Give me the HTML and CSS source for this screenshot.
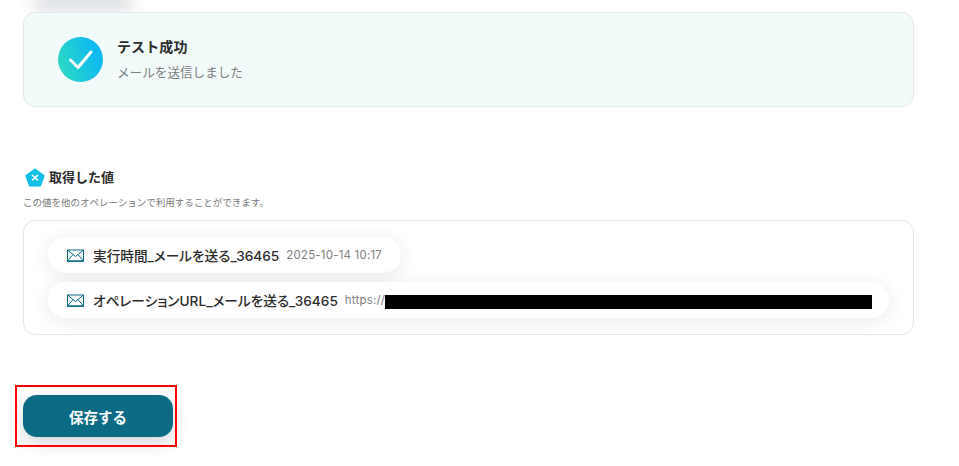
FILE: index.html
```html
<!DOCTYPE html>
<html lang="ja">
  <head>
    <meta charset="UTF-8" />
    <meta name="viewport" content="width=device-width, initial-scale=1.0" />
    <title>テスト成功</title>
    <link rel="stylesheet" href="styles.css">
  </head>
  <body>
    <div class="page">
      <!-- shadow of the button scrolled off above -->
      <div class="cut-btn"></div>

      <div class="result-card">
        <div class="check-icon">
          <svg width="45" height="45" viewBox="0 0 45 45" fill="none">
            <path d="M12.5 23 L20 30.5 L33 15" stroke="#fff" stroke-width="3" stroke-linecap="round" stroke-linejoin="round" />
          </svg>
        </div>
        <div class="result-text">
          <div class="result-title">テスト成功</div>
          <div class="result-sub">メールを送信しました</div>
        </div>
      </div>

      <div class="values-head">
        <svg class="pentagon" width="20" height="20" viewBox="0 0 20 20">
          <path d="M10 1.6 L18.6 7.8 L15.2 17.4 L4.8 17.4 L1.4 7.8 Z" fill="#12bfe8" stroke="#12bfe8" stroke-width="2" stroke-linejoin="round" />
          <path d="M7.4 7.4 L12.6 12 M12.6 7.4 L7.4 12" stroke="#fff" stroke-width="1.5" stroke-linecap="round" />
        </svg>
        <span>取得した値</span>
      </div>
      <p class="values-note">この値を他のオペレーションで利用することができます。</p>

      <div class="values-box">
        <div class="pill">
          <svg class="mail" width="17" height="13" viewBox="0 0 17 13" fill="none">
            <path d="M0.5 1 H16.5 V12 H0.5 Z M0.5 1 L8.5 7.5 L16.5 1 M0.5 12 L6 5.5 M16.5 12 L11 5.5" stroke="#0b6a84" stroke-width="1" />
            <path d="M0 12.2 H17" stroke="#0b6a84" stroke-width="1.4" />
          </svg>
          <span class="pill-name">実行時間_メールを送る_36465</span>
          <span class="pill-value">2025-10-14 10:17</span>
        </div>
        <div class="pill pill-wide">
          <svg class="mail" width="17" height="13" viewBox="0 0 17 13" fill="none">
            <path d="M0.5 1 H16.5 V12 H0.5 Z M0.5 1 L8.5 7.5 L16.5 1 M0.5 12 L6 5.5 M16.5 12 L11 5.5" stroke="#0b6a84" stroke-width="1" />
            <path d="M0 12.2 H17" stroke="#0b6a84" stroke-width="1.4" />
          </svg>
          <span class="pill-name">オペレーションURL_メールを送る_36465</span>
          <span class="pill-value">https://</span>
          <span class="redacted"></span>
        </div>
      </div>

      <div class="save-row">
        <button class="save-btn">保存する</button>
        <div class="highlight"></div>
      </div>
    </div>
  </body>
</html>
```

FILE: styles.css
```css
* {
  margin: 0;
  padding: 0;
  box-sizing: border-box;
}

html,
body {
  height: 100%;
  overflow: hidden;
}

body {
  background-color: #fff;
  color: #2b2b2b;
  font-family: "Inter", "Noto Sans CJK JP", sans-serif;
}

.page {
  width: 914px;
  padding-left: 23px;
  padding-top: 12px;
}

.cut-btn {
  width: 100px;
  height: 10px;
  margin: -22px 0 12px 10px;
  border-radius: 12px;
  box-shadow: 0 8px 16px rgba(30, 50, 70, 0.26);
}

.result-card {
  display: flex;
  align-items: center;
  gap: 14px;
  height: 95px;
  padding-left: 34px;
  background-color: #f2fafa;
  border: 1px solid #e4e8ea;
  border-radius: 12px;
}

.check-icon {
  width: 45px;
  height: 45px;
  border-radius: 50%;
  background: linear-gradient(70deg, #2ddcbf 5%, #10bbee 75%);
}

.check-icon svg {
  display: block;
}

.result-title {
  font-size: 14px;
  font-weight: 700;
  line-height: 20px;
  letter-spacing: 0.1px;
}

.result-sub {
  margin-top: 6px;
  font-size: 12.6px;
  line-height: 20px;
  color: #808080;
}

.values-head {
  display: flex;
  align-items: center;
  gap: 4px;
  margin-top: 59px;
  height: 20px;
  padding-left: 2px;
  font-size: 13px;
  font-weight: 700;
}

.pentagon {
  margin-top: 4px;
}

.values-note {
  margin-top: 9px;
  font-size: 9.5px;
  line-height: 16px;
  color: #777;
}

.values-box {
  display: flex;
  flex-direction: column;
  align-items: flex-start;
  gap: 9px;
  height: 115px;
  margin-top: 9px;
  padding: 16px 24px;
  background-color: #fff;
  border: 1px solid #e4e6e8;
  border-radius: 12px;
}

.pill {
  display: flex;
  align-items: center;
  height: 36px;
  padding: 0 19px;
  background-color: #fff;
  border-radius: 18px;
  box-shadow: 0 3px 18px rgba(30, 50, 70, 0.1);
}

.pill-wide {
  width: 841px;
}

.mail {
  flex-shrink: 0;
  margin-right: 9px;
}

.pill-name {
  font-size: 13.65px;
  font-weight: 500;
  font-feature-settings: "palt";
  white-space: nowrap;
  color: #2b2b2b;
}

.pill-value {
  margin-left: 7px;
  font-size: 11.5px;
  letter-spacing: 0.2px;
  white-space: nowrap;
  color: #808080;
}

.redacted {
  flex-shrink: 0;
  width: 487px;
  height: 14px;
  margin-top: 4px;
  background-color: #000;
}

.save-row {
  position: relative;
  margin-top: 60px;
  height: 42px;
}

.save-btn {
  display: block;
  width: 150px;
  height: 42px;
  border: none;
  border-radius: 14px;
  background-color: #0b6a84;
  color: #fff;
  font-family: inherit;
  font-size: 14.5px;
  font-weight: 700;
  box-shadow: 0 6px 16px rgba(30, 50, 70, 0.2);
}

/* red annotation box around the button */
.highlight {
  position: absolute;
  left: -8px;
  top: -10px;
  width: 162px;
  height: 62px;
  border: 2px solid #f00;
}
```
